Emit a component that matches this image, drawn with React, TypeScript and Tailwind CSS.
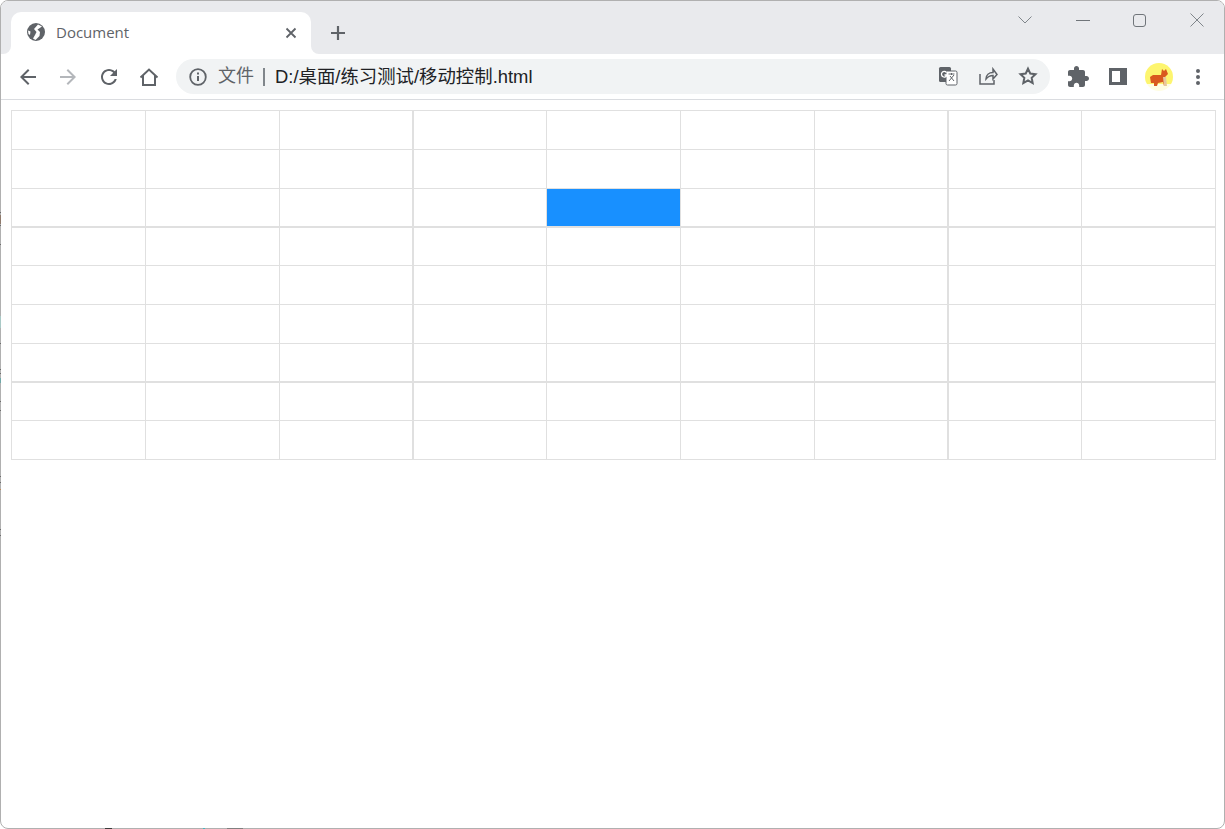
const columns = [134, 134, 134, 133, 134, 134, 134, 133, 134];
const rows = [39, 39, 39, 38, 39, 39, 39, 38, 39];

// bits of the window behind that peek out along the frame
const leftMarks = [
    {y: 212, h: 1, color: "#6b6b6b"},
    {y: 215, h: 9, color: "#8f7a6c"},
    {y: 225, h: 1, color: "#6b6b6b"},
    {y: 244, h: 1, color: "#6b6b6b"},
    {y: 316, h: 12, color: "#a9c9c6"},
    {y: 343, h: 1, color: "#6b6b6b"},
    {y: 369, h: 1, color: "#6b6b6b"},
    {y: 373, h: 1, color: "#6b6b6b"},
    {y: 378, h: 5, color: "#6fa8a8"},
    {y: 401, h: 1, color: "#6b6b6b"},
    {y: 410, h: 1, color: "#6b6b6b"},
    {y: 476, h: 1, color: "#6b6b6b"},
    {y: 482, h: 1, color: "#6b6b6b"},
    {y: 489, h: 1, color: "#c08a5a"},
    {y: 529, h: 1, color: "#6b6b6b"},
    {y: 535, h: 1, color: "#6b6b6b"},
];

const bottomMarks = [
    {x: 105, w: 7, color: "#3c3c3c"},
    {x: 203, w: 2, color: "#45b5c0"},
    {x: 227, w: 16, color: "#808080"},
];

function Icon({d, className}: {d: string; className: string}) {
    return (
        <svg viewBox="0 0 24 24" className={className} fill="currentColor">
            <path d={d} />
        </svg>
    );
}

function TabStrip() {
    return (
        <div className="h-[53px] bg-[#e9eaed] flex items-end relative shrink-0">
            <div className="relative ml-[10px] w-[300px] h-[42px] bg-white rounded-t-[10px] flex items-center pl-[16px] pb-[2px]">
                <div className="absolute left-[-8px] bottom-0 w-[8px] h-[8px] bg-white">
                    <div className="w-full h-full bg-[#e9eaed] rounded-br-[8px]"></div>
                </div>
                <div className="absolute right-[-8px] bottom-0 w-[8px] h-[8px] bg-white">
                    <div className="w-full h-full bg-[#e9eaed] rounded-bl-[8px]"></div>
                </div>
                <svg viewBox="0 0 18 18" className="w-[18px] h-[18px]">
                    <circle cx="9" cy="9" r="9" fill="#5f6368" />
                    <path d="M15 3.500L11 1.500 7 6l2.500 3L8 12l-2 3.500 2.500 1.500 4-4 .5-4-2.500-2.500zM1 7.500l2.500 1L3 12 1.500 11z" fill="#fff" />
                </svg>
                <span className="ml-[11px] text-[15px] text-[#5f6368] font-['Open_Sans',sans-serif]">Document</span>
                <svg viewBox="0 0 12 12" className="absolute right-[14px] top-[15px] w-[12px] h-[12px] text-[#5f6368]" stroke="currentColor" strokeWidth="1.800">
                    <path d="M1.500 1.500l9 9M10.500 1.500l-9 9" />
                </svg>
            </div>
            <svg viewBox="0 0 16 16" className="ml-[19px] mb-[13px] w-[16px] h-[16px] text-[#5f6368]" stroke="currentColor" strokeWidth="2.200">
                <path d="M8 1v14M1 8h14" />
            </svg>
            <div className="absolute right-[20px] top-[12px] flex items-center text-[#80868b]">
                <svg viewBox="0 0 14 8" className="w-[14px] h-[8px] mr-[44px]" fill="none" stroke="currentColor" strokeWidth="1">
                    <path d="M.5.5L7 7l6.500-6.500" />
                </svg>
                <div className="w-[14px] h-px bg-[#70757a] mr-[43px]"></div>
                <div className="w-[13px] h-[13px] border border-[#70757a] rounded-[3px] mr-[44px]"></div>
                <svg viewBox="0 0 14 14" className="w-[14px] h-[14px]" fill="none" stroke="currentColor" strokeWidth="1">
                    <path d="M.5.5l13 13M13.500.5l-13 13" />
                </svg>
            </div>
        </div>
    );
}

function Toolbar() {
    return (
        <div className="h-[46px] bg-white border-b border-[#dadce0] flex items-center shrink-0 relative">
            <Icon className="ml-[15px] w-[24px] h-[24px] text-[#5f6368]" d="M20 11H7.830l5.590-5.590L12 4l-8 8 8 8 1.410-1.410L7.830 13H20v-2z" />
            <Icon className="ml-[16px] w-[24px] h-[24px] text-[#b4b7bb]" d="M4 11h12.170l-5.590-5.590L12 4l8 8-8 8-1.410-1.410L16.170 13H4v-2z" />
            <Icon className="ml-[17px] w-[24px] h-[24px] text-[#5f6368]" d="M17.650 6.350C16.200 4.900 14.210 4 12 4c-4.420 0-7.990 3.580-7.990 8s3.570 8 7.990 8c3.730 0 6.840-2.550 7.730-6h-2.080c-.82 2.330-3.040 4-5.650 4-3.310 0-6-2.690-6-6s2.690-6 6-6c1.660 0 3.140.69 4.220 1.780L13 11h7V4l-2.350 2.350z" />
            <svg viewBox="0 0 24 24" className="ml-[16px] w-[24px] h-[24px] text-[#5f6368]" fill="none" stroke="currentColor" strokeWidth="2">
                <path d="M3.500 12.500L12 4.500l8.500 8M6 10.500V20h12v-9.500" />
            </svg>
            <div className="ml-[15px] w-[874px] h-[35px] bg-[#f1f3f4] rounded-full flex items-center pl-[13px] relative">
                <svg viewBox="0 0 18 18" className="w-[18px] h-[18px] text-[#5f6368]" fill="none" stroke="currentColor">
                    <circle cx="9" cy="9" r="7.800" strokeWidth="1.800" />
                    <path d="M9 8v5M9 4.500v2" strokeWidth="2" />
                </svg>
                <span className="ml-[11px] text-[18px] text-[#5f6368] font-['Liberation_Sans','Noto_Sans_CJK_SC',sans-serif]">文件</span>
                <div className="ml-[9px] w-[2px] h-[18px] bg-[#80868b]"></div>
                <span className="ml-[10px] text-[18.400px] text-[#202124] font-['Liberation_Sans','Noto_Sans_CJK_SC',sans-serif]">D:/桌面/练习测试/移动控制.html</span>
                <div className="absolute right-[12px] top-[7px] flex items-center gap-[20px] text-[#5f6368]">
                    <svg viewBox="0 0 20 20" className="w-[20px] h-[20px]">
                        <rect x="1" y="1" width="12" height="15" rx="1.500" fill="#5f6368" />
                        <rect x="8" y="5" width="11" height="14" rx="1.500" fill="#fff" stroke="#5f6368" />
                        <path d="M10.500 8h6M13.500 7v2M11 15l5-6M12 10l4 5" stroke="#5f6368" fill="none" />
                        <path d="M8.500 6.500A2.800 2.800 0 1 0 9 9H6.500" fill="none" stroke="#fff" strokeWidth="1.300" />
                    </svg>
                    <svg viewBox="0 0 20 20" className="w-[20px] h-[20px]" fill="none" stroke="currentColor" strokeWidth="1.500">
                        <path d="M2 8v10h14v-4M8 13c0-4 3-6.500 7-6.500V3l4 5.500L15 13V9.500c-3 0-5 1-7 3.500z" />
                    </svg>
                    <svg viewBox="0 0 24 24" className="w-[20px] h-[20px]" fill="none" stroke="currentColor" strokeWidth="2.400">
                        <path d="M12 3.200l2.700 5.800 6.300.8-4.600 4.300 1.200 6.300L12 17.300l-5.600 3.100 1.200-6.300L3 9.800l6.300-.8z" />
                    </svg>
                </div>
            </div>
            <Icon className="ml-[16px] w-[24px] h-[24px] text-[#5f6368]" d="M20.500 11H19V7c0-1.100-.9-2-2-2h-4V3.500C13 2.120 11.880 1 10.500 1S8 2.120 8 3.500V5H4c-1.100 0-1.990.9-1.990 2v3.800H3.500c1.490 0 2.700 1.210 2.700 2.700s-1.210 2.700-2.700 2.700H2V20c0 1.100.9 2 2 2h3.800v-1.500c0-1.490 1.210-2.700 2.700-2.700 1.490 0 2.700 1.210 2.700 2.700V22H17c1.100 0 2-.9 2-2v-4h1.500c1.380 0 2.500-1.120 2.500-2.500S21.880 11 20.500 11z" />
            <div className="ml-[19px] w-[18px] h-[17px] border-[3px] border-[#5f6368] flex justify-end">
                <div className="w-[4px] bg-[#5f6368]"></div>
            </div>
            <svg viewBox="0 0 28 28" className="ml-[18px] w-[28px] h-[28px]">
                <circle cx="14" cy="14" r="14" fill="#fdf56f" />
                <path d="M0 21h28v7H0z" fill="#fff" opacity="0.8" />
                <path d="M5 14l3-2h8l1-6 2 2 2-2 2 5-3 3 1 9h-2l-1-4-5 1-1 3H9v-3H6z" fill="#d9591f" />
                <path d="M18 14h3l1 9h-3z" fill="#e8c79c" />
            </svg>
            <svg viewBox="0 0 4 16" className="ml-[23px] w-[4px] h-[16px] text-[#5f6368]" fill="currentColor">
                <circle cx="2" cy="2" r="2" />
                <circle cx="2" cy="8" r="2" />
                <circle cx="2" cy="14" r="2" />
            </svg>
        </div>
    );
}

function Board() {
    return (
        <div className="ml-[10px] mt-[10px] w-[1205px] border-l border-t border-[#e0e0e0] grid grid-cols-[134px_134px_134px_133px_134px_134px_134px_133px_134px] grid-rows-[39px_39px_39px_38px_39px_39px_39px_38px_39px]">
            {rows.map((_, r) =>
                columns.map((_, c) => (
                    <div
                        key={`${r}-${c}`}
                        className={`border-[#e0e0e0] 
                            ${c == 2 || c == 6 ? "border-r-2" : "border-r"}
                            ${r == 2 || r == 6 ? "border-b-2" : "border-b"}
                            ${r == 2 && c == 4 ? "bg-[#1890ff]" : "bg-white"}
                        `}
                    ></div>
                ))
            )}
        </div>
    );
}

export default function App() {
    return (
        <div className="w-[1225px] h-[829px] overflow-hidden bg-white relative">
            <div className="h-full flex flex-col overflow-hidden rounded-[8px] border border-[#b0b0b0]">
                <TabStrip />
                <Toolbar />
                <Board />
            </div>
            {leftMarks.map((m) => (
                <div key={m.y} className="absolute left-0 w-px" style={{top: m.y, height: m.h, backgroundColor: m.color}}></div>
            ))}
            {bottomMarks.map((m) => (
                <div key={m.x} className="absolute bottom-0 h-px" style={{left: m.x, width: m.w, backgroundColor: m.color}}></div>
            ))}
        </div>
    );
}
